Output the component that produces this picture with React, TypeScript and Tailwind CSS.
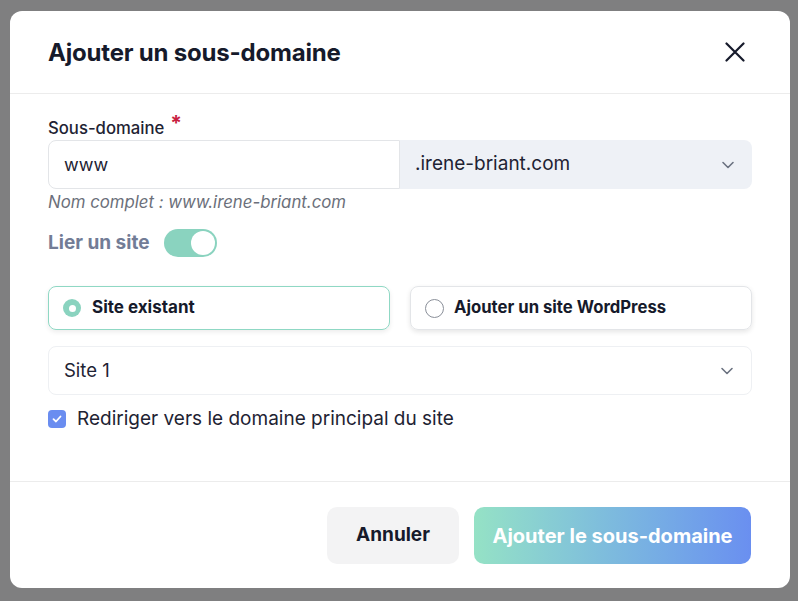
import React from "react";

const font = { fontFamily: "Inter, 'Noto Sans', sans-serif" };

function Chevron() {
  return (
    <svg width="14" height="14" viewBox="0 0 14 14" fill="none">
      <path d="M2 4.5 L7 9.5 L12 4.5" stroke="#6b7280" strokeWidth="1.6" strokeLinecap="round" strokeLinejoin="round" />
    </svg>
  );
}

export default function App() {
  return (
    <div className="w-[798px] h-[601px] bg-[#7f7f80] pt-[11px] pl-[10px] overflow-hidden" style={font}>
      <div className="w-[780px] h-[577px] bg-white rounded-xl flex flex-col">
        {/* Header */}
        <div className="h-[83px] flex items-center justify-between pl-[38px] pr-[45px] border-b border-[#ececec]">
          <h2 className="text-[24px] font-bold text-[#161a2b] tracking-[-0.2px] pt-[2px]">Ajouter un sous-domaine</h2>
          <svg width="20" height="20" viewBox="0 0 20 20" fill="none">
            <path d="M1.5 1.5 L18.5 18.5 M18.5 1.5 L1.5 18.5" stroke="#161a2b" strokeWidth="2.2" strokeLinecap="round" />
          </svg>
        </div>

        {/* Body */}
        <div className="flex-1 px-[38px] pt-[24px] flex flex-col">
          <div className="h-[20px] flex items-center text-[16.7px] font-medium text-[#1e2333] leading-[20px]">
            Sous-domaine
            <span className="text-[21px] text-[#c8203f] font-bold ml-[6px] -mt-[10px] leading-none">*</span>
          </div>
          <div className="mt-[2px] flex h-[49px]">
            <div className="w-[352px] h-full border border-[#e3e5e8] rounded-l-lg flex items-center pl-[15px] text-[18px] text-[#1e2333]">
              www
            </div>
            <div className="flex-1 h-full bg-[#eef1f6] rounded-r-lg flex items-center justify-between pl-[15px] pr-[17px] text-[19px] text-[#1e2333]">
              <span>.irene-briant.com</span>
              <Chevron />
            </div>
          </div>
          <div className="mt-[3px] h-[20px] leading-[20px] text-[16.8px] italic text-[#6b6f7a]">
            Nom complet : www.irene-briant.com
          </div>

          <div className="mt-[17px] flex items-center h-[28px] gap-[14px]">
            <span className="text-[19px] font-bold text-[#727c96]">Lier un site</span>
            <div className="w-[53px] h-[28px] rounded-full bg-[#8ad3bf] flex items-center justify-end pr-[2px]">
              <div className="w-[24px] h-[24px] rounded-full bg-white" />
            </div>
          </div>

          <div className="mt-[29px] grid grid-cols-2 gap-[20px]">
            <div className="h-[44px] rounded-lg border border-[#8fd8c4] shadow-[0_2px_5px_rgba(0,0,0,0.08)] flex items-center pl-[14px] gap-[11px]">
              <div className="w-[18px] h-[18px] rounded-full bg-[#8ad3bf] flex items-center justify-center">
                <div className="w-[7px] h-[7px] rounded-full bg-white" />
              </div>
              <span className="text-[17px] font-bold text-[#161a2b]">Site existant</span>
            </div>
            <div className="h-[44px] rounded-lg border border-[#e3e5e8] shadow-[0_2px_5px_rgba(0,0,0,0.1)] flex items-center pl-[14px] gap-[10px]">
              <div className="w-[19px] h-[19px] rounded-full border border-[#8a8f99] bg-white" />
              <span className="text-[16.7px] font-bold text-[#161a2b]">Ajouter un site WordPress</span>
            </div>
          </div>

          <div className="mt-[16px] h-[49px] border border-[#eef0f3] rounded-lg flex items-center justify-between pl-[15px] pr-[17px] text-[18.5px] text-[#1e2333]">
            <span>Site 1</span>
            <Chevron />
          </div>

          <div className="mt-[14px] flex items-center h-[20px] gap-[11px]">
            <div className="w-[18px] h-[18px] rounded-[4px] bg-[#6a8df0] flex items-center justify-center">
              <svg width="12" height="12" viewBox="0 0 12 12" fill="none">
                <path d="M2.5 6.2 L5 8.5 L9.5 3.5" stroke="white" strokeWidth="1.8" strokeLinecap="round" strokeLinejoin="round" />
              </svg>
            </div>
            <span className="text-[19px] text-[#1e2333]">Rediriger vers le domaine principal du site</span>
          </div>
        </div>

        {/* Footer */}
        <div className="border-t border-[#ececec] pt-[25px] pb-[24px] pr-[39px] flex justify-end gap-[15px]">
          <button className="w-[132px] h-[57px] rounded-[10px] bg-[#f3f3f4] text-[19px] font-bold text-[#161a2b]">
            Annuler
          </button>
          <button className="w-[277px] h-[57px] rounded-[10px] bg-gradient-to-r from-[#95e2c5] to-[#6a8ff0] text-[20px] font-bold text-white">
            Ajouter le sous-domaine
          </button>
        </div>
      </div>
    </div>
  );
}
